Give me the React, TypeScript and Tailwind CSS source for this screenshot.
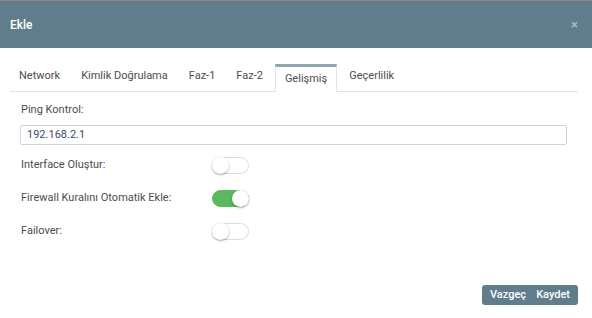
import React from 'react';

const tabs = ['Network', 'Kimlik Doğrulama', 'Faz-1', 'Faz-2', 'Gelişmiş', 'Geçerlilik'];

function Toggle({ on }: { on?: boolean }) {
  return (
    <div
      className={
        'relative w-[37px] h-[17px] rounded-full border ' +
        (on ? 'bg-[#5cb85c] border-[#5cb85c]' : 'bg-white border-[#dcdcdc]')
      }
    >
      <div
        className={
          'absolute top-[-1px] w-[17px] h-[17px] rounded-full bg-white shadow-[0_1px_2px_rgba(0,0,0,0.35)] ' +
          (on ? 'right-[-1px]' : 'left-[-1px]')
        }
      />
    </div>
  );
}

function Row({ label, on }: { label: string; on?: boolean }) {
  return (
    <div className="flex items-center h-[17px]">
      <span className="w-[191px] text-[11px] text-[#4d4d4d]">{label}</span>
      <Toggle on={on} />
    </div>
  );
}

export default function App() {
  const [active, setActive] = React.useState('Gelişmiş');

  return (
    <div
      className="w-[592px] h-[318px] bg-white flex flex-col"
      style={{ fontFamily: 'Roboto, "Noto Sans", sans-serif' }}
    >
      <div className="h-px bg-[#8d8580]" />
      <div className="h-[47px] bg-[#607d8b] flex items-center justify-between pl-[10px] pr-[14px]">
        <span className="text-white text-[12px] font-medium">Ekle</span>
        <span className="text-[#a9b9c1] text-[13px] font-bold leading-none">×</span>
      </div>

      <div className="flex-1 flex flex-col pl-[10px] pr-[14px] pt-[16px]">
        <div className="flex h-[28px] border-b border-[#dde2ec]">
          {tabs.map((t) => (
            <button
              key={t}
              onClick={() => setActive(t)}
              className={
                'px-[9px] mr-[3px] text-[11px] text-[#4d4d4d] flex items-center ' +
                (t === active
                  ? 'border-t-[3px] border-x border-t-[#8fa5b0] border-x-[#dde2ec] bg-white -mb-px h-[28px] pb-[1px]'
                  : 'pb-[2px]')
              }
            >
              {t}
            </button>
          ))}
        </div>

        <div className="pl-[11px] pr-[1px] pt-[10px] flex flex-col">
          <span className="text-[11px] text-[#4d4d4d]">Ping Kontrol:</span>
          <input
            defaultValue="192.168.2.1"
            className="mt-[6px] -ml-px h-[20px] w-[547px] border border-[#ccd3e1] rounded-[2px] px-[6px] text-[11px] text-[#3c4b6b] outline-none"
          />
          <div className="mt-[12px] flex flex-col gap-[16px]">
            <Row label="Interface Oluştur:" />
            <Row label="Firewall Kuralını Otomatik Ekle:" on />
            <Row label="Failover:" />
          </div>
        </div>

        <div className="mt-auto mb-[13px] flex justify-end">
          <div className="flex bg-[#607d8b] rounded-[3px] h-[20px] items-center px-[3px]">
            <button className="px-[5px] text-white text-[11px] font-medium">Vazgeç</button>
            <button className="px-[5px] text-white text-[11px] font-medium">Kaydet</button>
          </div>
        </div>
      </div>
    </div>
  );
}
